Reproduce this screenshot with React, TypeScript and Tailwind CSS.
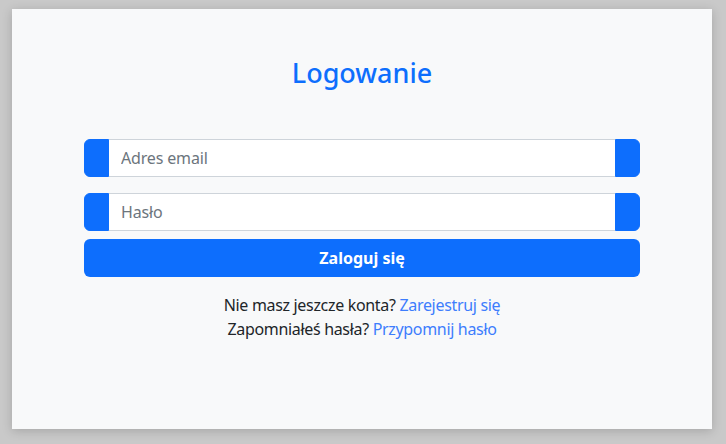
import React from "react";

const FONT = { fontFamily: '"Noto Sans", "Open Sans", sans-serif' };

function Field({ placeholder, type }: { placeholder: string; type: string }) {
  return (
    <div className="flex h-[38px] w-full">
      <span className="w-[25px] shrink-0 rounded-l-[6px] border border-[#0d6efd] bg-[#0d6efd]" />
      <input
        type={type}
        placeholder={placeholder}
        className="min-w-0 flex-1 border-y border-[#ced4da] bg-white px-3 text-[16px] tracking-[-0.01em] text-[#212529] outline-none placeholder:text-[#6c757d]"
      />
      <span className="w-[25px] shrink-0 rounded-r-[6px] border border-[#0d6efd] bg-[#0d6efd]" />
    </div>
  );
}

export default function App() {
  return (
    <div className="min-h-screen bg-[#c9c9c9] pl-[12px] pt-[9px]" style={FONT}>
      <div className="flex h-[420px] w-[700px] flex-col items-center bg-[#f8f9fa] px-[72px] pt-[45px] shadow-[0_2px_10px_rgba(0,0,0,0.18)]">
        <h2 className="text-[27px] font-medium leading-[38px] text-[#0d6efd]">Logowanie</h2>
        <form className="mt-[47px] flex w-full flex-col" onSubmit={(e) => e.preventDefault()}>
          <Field placeholder="Adres email" type="email" />
          <div className="mt-[16px]">
            <Field placeholder="Hasło" type="password" />
          </div>
          <button
            type="submit"
            className="mt-[8px] h-[38px] w-full rounded-[6px] bg-[#0d6efd] text-[16px] font-bold text-white"
          >
            Zaloguj się
          </button>
        </form>
        <div className="mt-[16px] text-center text-[16px] leading-[24px] tracking-[-0.02em] text-[#212529]">
          <p>
            Nie masz jeszcze konta? <a href="#" className="text-[#3d7dfd]">Zarejestruj się</a>
          </p>
          <p>
            Zapomniałeś hasła? <a href="#" className="text-[#3d7dfd]">Przypomnij hasło</a>
          </p>
        </div>
      </div>
    </div>
  );
}
